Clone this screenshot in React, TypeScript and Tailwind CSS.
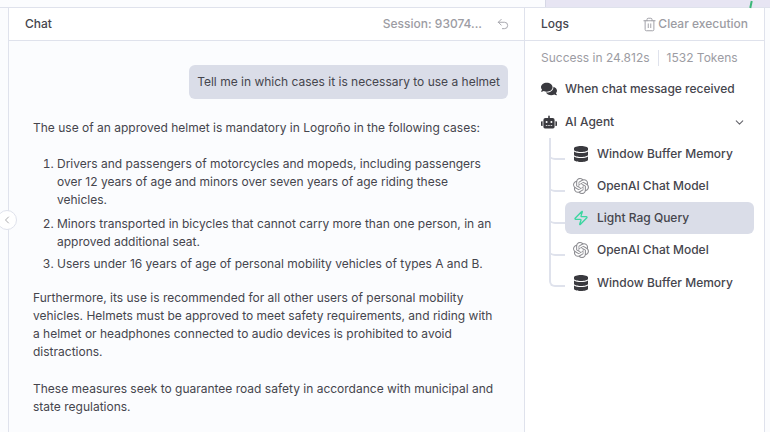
import { ChevronDown, ChevronLeft, Trash2, Undo2, Zap } from 'lucide-react';
import { FaComments, FaDatabase, FaRobot } from 'react-icons/fa';
import { SiOpenai } from 'react-icons/si';

const subNodes = [
  { label: 'Window Buffer Memory', icon: 'db' },
  { label: 'OpenAI Chat Model', icon: 'ai' },
  { label: 'Light Rag Query', icon: 'zap', active: true },
  { label: 'OpenAI Chat Model', icon: 'ai' },
  { label: 'Window Buffer Memory', icon: 'db' },
];

function NodeIcon({ kind }: { kind: string }) {
  if (kind === 'db') return <FaDatabase className="text-[#3a3a3f]" size={16} />;
  if (kind === 'ai') return <SiOpenai className="text-[#8d8d92]" size={16} />;
  return <Zap className="text-[#3bd6a0]" size={16} strokeWidth={2} />;
}

export default function App() {
  return (
    <div className="relative flex h-[432px] w-[770px] flex-col overflow-hidden bg-[#fbfcfe] font-['Inter',sans-serif] text-[#45454d]">
      {/* strip of the canvas above the panels */}
      <div className="flex h-[8px] shrink-0 justify-end border-b border-[#dfe2ec]">
        <div className="relative h-[7px] w-[225px] border-l border-[#d6d8e6] bg-[#e7e5f3]">
          <div className="absolute left-[204px] top-[1px] h-[7px] w-[2px] rotate-12 bg-[#3cb878]" />
        </div>
      </div>

      <div className="flex min-h-0 flex-1 pl-2">
        {/* chat */}
        <div className="flex w-[517px] shrink-0 flex-col border-x border-[#dfe2ec]">
          <div className="flex h-[33px] shrink-0 items-center justify-between border-b border-[#dfe2ec] bg-white pl-4 pr-[14px] text-xs font-medium">
            <span>Chat</span>
            <div className="flex items-center gap-[14px] text-[#9c9ca3]">
              <span>Session: 93074...</span>
              <Undo2 size={14} strokeWidth={1.5} />
            </div>
          </div>
          <div className="flex flex-1 flex-col px-6 pt-[24px] text-xs leading-[18px]">
            <div className="mb-[20px] -mr-[8px] self-end rounded-md bg-[#dadde8] px-2 py-2">
              Tell me in which cases it is necessary to use a helmet
            </div>
            <p>The use of an approved helmet is mandatory in Logroño in the following cases:</p>
            <ol className="mt-[18px] list-decimal pl-6">
              <li className="mb-[6px]">
                Drivers and passengers of motorcycles and mopeds, including passengers over 12 years of age and minors over seven years of age riding these vehicles.
              </li>
              <li className="mb-[4px]">
                Minors transported in bicycles that cannot carry more than one person, in an approved additional seat.
              </li>
              <li>Users under 16 years of age of personal mobility vehicles of types A and B.</li>
            </ol>
            <p className="mt-[16px]">
              Furthermore, its use is recommended for all other users of personal mobility vehicles. Helmets must be approved to meet safety requirements, and riding with a helmet or headphones connected to audio devices is prohibited to avoid distractions.
            </p>
            <p className="mt-[19px]">
              These measures seek to guarantee road safety in accordance with municipal and state regulations.
            </p>
          </div>
        </div>

        {/* logs */}
        <div className="flex w-[240px] shrink-0 flex-col border-r border-[#dfe2ec] bg-white">
          <div className="flex h-[33px] shrink-0 items-center justify-between border-b border-[#dfe2ec] pl-4 pr-4 text-xs font-medium">
            <span>Logs</span>
            <div className="flex items-center gap-[1px] text-[#9c9ca3]">
              <Trash2 size={15} strokeWidth={1.5} />
              <span>Clear execution</span>
            </div>
          </div>
          <div className="flex flex-col px-4 pt-2">
            <div className="flex h-[18px] items-center text-xs text-[#9c9ca3]">
              <span>Success in 24.812s</span>
              <span className="mx-[8px] h-[16px] w-px bg-[#dfe2ec]" />
              <span>1532 Tokens</span>
            </div>
            <div className="mt-[10px] flex h-[24px] items-center gap-2 text-xs font-medium">
              <FaComments className="text-[#3a3a3f]" size={16} />
              <span>When chat message received</span>
            </div>
            <div className="mt-[9px] flex h-[24px] items-center gap-2 pr-[2px] text-xs font-medium">
              <FaRobot className="text-[#3a3a3f]" size={16} />
              <span className="flex-1">AI Agent</span>
              <ChevronDown size={13} className="text-[#66666d]" />
            </div>
            <div className="relative mt-[4px] flex flex-col pl-[8px]">
              <div className="absolute left-[8px] top-0 h-[149px] w-[16px] rounded-bl-[6px] border-b-2 border-l-2 border-[#dfe2ec]" />
              {subNodes.map((node, i) => (
                <div key={i} className={`relative h-[32px] ${i === 4 ? 'mt-[1px]' : ''}`}>
                  {i < 4 && (
                    <div className="absolute left-[0px] top-[14px] h-[8px] w-[16px] rounded-bl-[6px] border-b-2 border-[#dfe2ec]" />
                  )}
                  <div
                    className={`ml-[16px] flex h-[32px] w-[189px] items-center gap-2 rounded-md pl-2 text-xs font-medium ${
                      node.active ? 'bg-[#dadde8]' : ''
                    }`}
                  >
                    <span className="flex w-4 justify-center">
                      <NodeIcon kind={node.icon} />
                    </span>
                    <span>{node.label}</span>
                  </div>
                </div>
              ))}
            </div>
          </div>
        </div>
      </div>

      {/* collapse toggle on the chat border */}
      <button className="absolute left-0 top-[210px] flex h-[20px] w-[20px] -translate-x-[3px] items-center justify-center rounded-full border border-[#dfe2ec] bg-white text-[#8d8d92]">
        <ChevronLeft size={12} strokeWidth={1.5} />
      </button>
    </div>
  );
}
